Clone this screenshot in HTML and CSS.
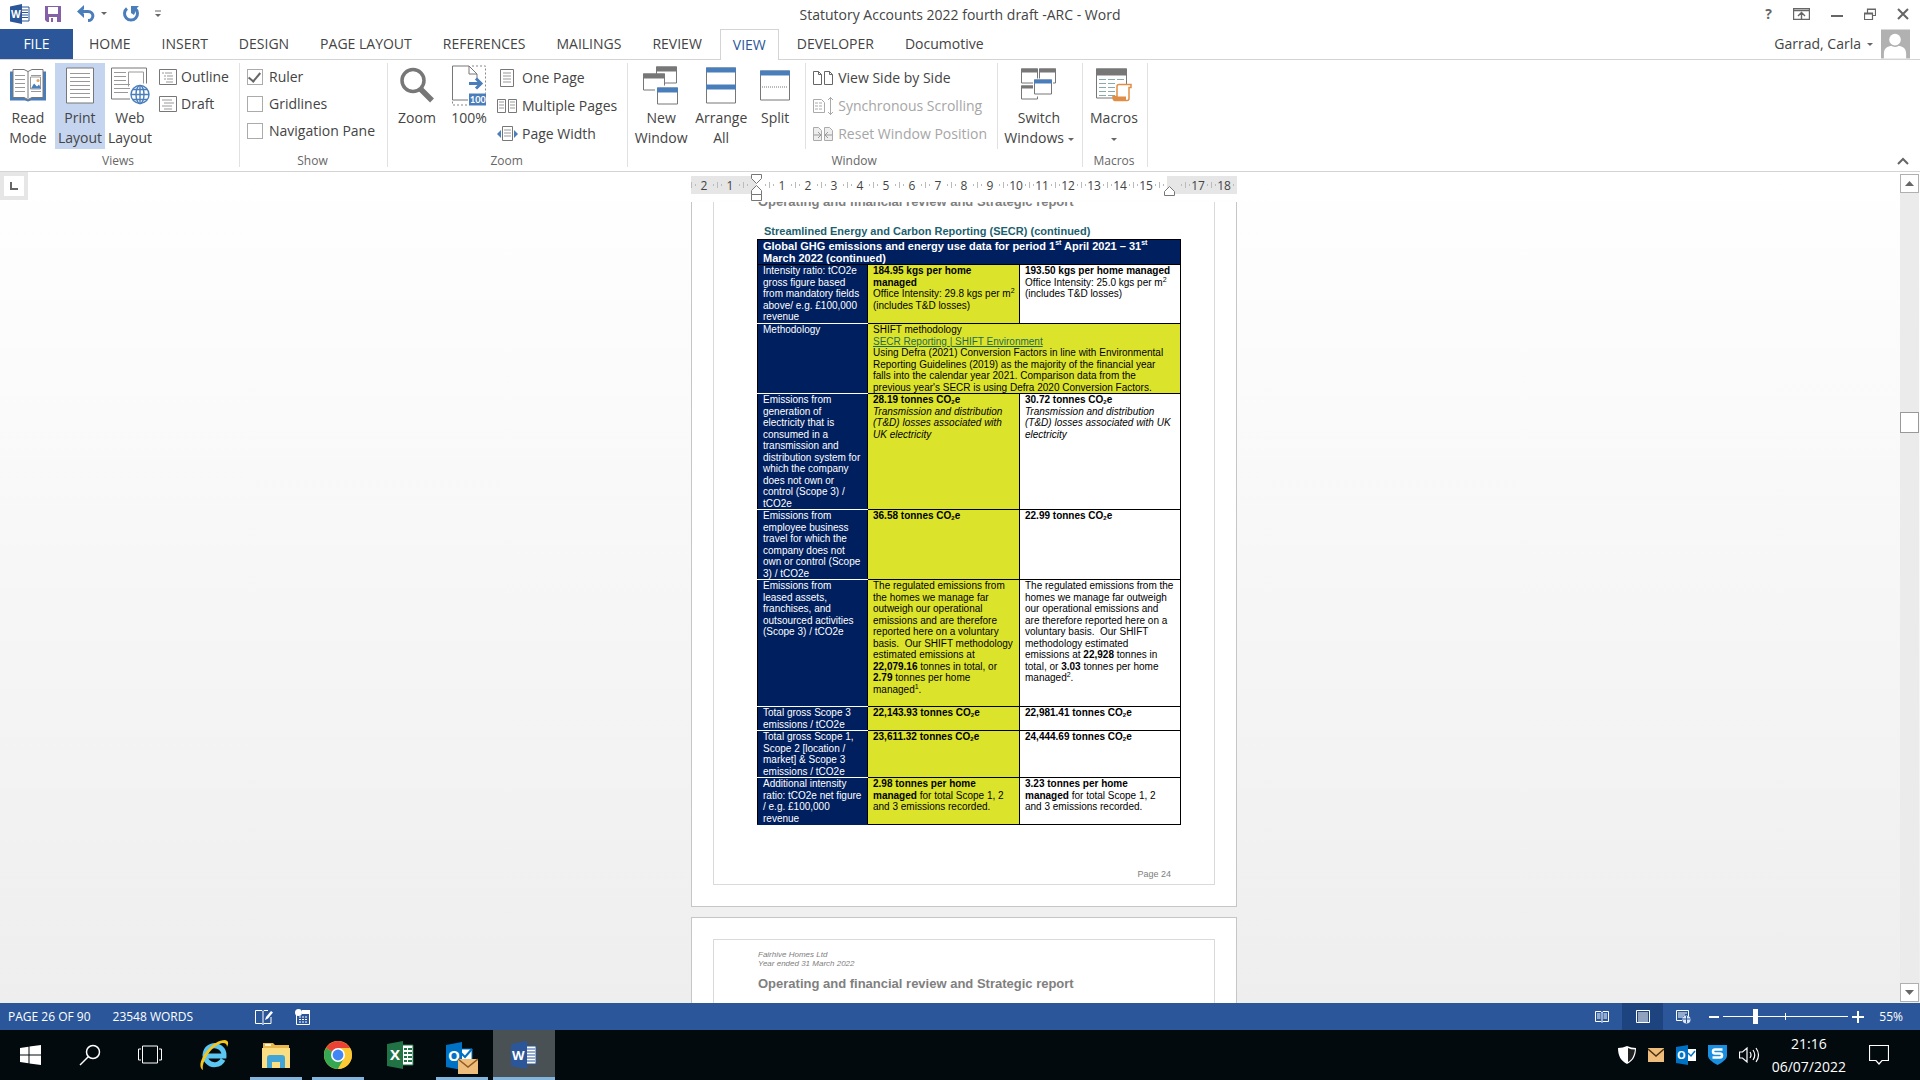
FILE: index.html
```html
<!DOCTYPE html>
<html lang="en">
<head>
<meta charset="utf-8">
<title>Statutory Accounts 2022 fourth draft -ARC - Word</title>
<link rel="stylesheet" href="styles.css">
</head>
<body>
<header class="titlebar">
  <div class="quick">
    <svg class="ic-word" width="20" height="20" viewBox="0 0 20 20"><path d="M10 3h9v14h-9z" fill="#fff" stroke="#2b579a"/><path d="M12 6h6M12 8.500h6M12 11h6M12 13.500h6" stroke="#2b579a"/><path d="M0 2.500 12 0v20L0 17.500z" fill="#2b579a"/><text x="1" y="14" font-family="Open Sans, sans-serif" font-size="10" font-weight="700" fill="#fff">W</text></svg>
    <button class="q-save" aria-label="Save"><svg width="16" height="16" viewBox="0 0 16 16"><path d="M0 0h16v16H2L0 14z" fill="#8560a8"/><path d="M3 1h10v7H3z" fill="#fff"/><path d="M4 11h8v5H4z" fill="#fff"/><path d="M6 12h2v4H6z" fill="#8560a8"/></svg></button>
    <button class="q-undo" aria-label="Undo"><svg width="32" height="18" viewBox="0 0 32 18"><path d="M2 6.500h9c7 0 6 9 0 9" fill="none" stroke="#4a7ebb" stroke-width="3"/><path d="M0 6.500 7 0v4l-2 2.500L7 9v4z" fill="#4a7ebb"/><path d="m24 7 6 0-3 3z" fill="#666"/></svg></button>
    <button class="q-redo" aria-label="Repeat"><svg width="18" height="18" viewBox="0 0 18 18"><path d="M5 3.500a6.500 6.500 0 1 0 8 0" fill="none" stroke="#4a7ebb" stroke-width="3"/><path d="M9 1h8l-2 2-3 7-3-2z" fill="#4a7ebb"/></svg></button>
    <button class="q-more" aria-label="Customize"><svg width="6" height="8" viewBox="0 0 6 8"><path d="M0 1h6" stroke="#666"/><path d="M0 4h6L3 7z" fill="#666"/></svg></button>
  </div>
  <h1 class="doc-title">Statutory Accounts 2022 fourth draft -ARC - Word</h1>
  <div class="wincontrols">
    <button aria-label="Help" class="help">?</button>
    <button aria-label="Ribbon display options"><svg width="17" height="12" viewBox="0 0 17 12"><path d="M.5.5h16v11H.5zM.5 2.500h16M8.500 11V5M5 8l3.500-3.500L12 8" fill="none" stroke="#666" stroke-width="1.400"/></svg></button>
    <button aria-label="Minimize"><svg width="12" height="12" viewBox="0 0 12 12"><path d="M0 8h12" stroke="#666" stroke-width="2"/></svg></button>
    <button aria-label="Restore"><svg width="12" height="12" viewBox="0 0 12 12"><path d="M.5 5h8v6.500h-8zM.5 6h8M3.500 5V1h8v6.500h-3M3.500 1.500h8" fill="none" stroke="#666" stroke-width="1.200"/></svg></button>
    <button aria-label="Close"><svg width="12" height="12" viewBox="0 0 12 12"><path d="m1 1 10 10M11 1 1 11" stroke="#666" stroke-width="2"/></svg></button>
  </div>
</header>

<nav class="tabs">
  <button class="tab file">FILE</button>
  <button class="tab">HOME</button>
  <button class="tab">INSERT</button>
  <button class="tab">DESIGN</button>
  <button class="tab">PAGE LAYOUT</button>
  <button class="tab">REFERENCES</button>
  <button class="tab">MAILINGS</button>
  <button class="tab">REVIEW</button>
  <button class="tab active">VIEW</button>
  <button class="tab">DEVELOPER</button>
  <button class="tab">Documotive</button>
  <button class="account">Garrad, Carla <i class="caret"></i><svg width="29" height="30" viewBox="0 0 30 30"><path d="M0 0h30v30H0z" fill="#b1b1b1"/><circle cx="14.500" cy="10.500" r="6" fill="#fff"/><path d="M3 30v-5c0-6 4-8 8-8q4 2 7 0c4 0 8 2 8 8v5z" fill="#fff"/></svg></button>
</nav>

<section class="ribbon">
  <div class="group">
    <div class="controls">
      <button class="big w54"><svg width="38" height="34" viewBox="0 0 38 34"><path d="M1 3v29h15l3 1 3-1h15V3" fill="#4a7ebb"/><path d="M4 1h11l4 2 4-2h11v28H23l-4 2-4-2H4zM19 3v27" fill="#fff" stroke="#777"/><path d="M6 7h10M6 11h10M6 15h10M6 19h10M6 23h10M22 23h10M22 7h10" stroke="#999"/><path d="M21.500 8.500h10v12h-10z" fill="#fff" stroke="#999"/><path d="m22 20 3-5 3 3 2-2 2 4z" fill="#4a7ebb"/><circle cx="29" cy="12" r="1.500" fill="#e8a25c"/></svg><span>Read<br>Mode</span></button>
      <button class="big w50 on"><svg width="28" height="36" viewBox="0 0 28 36"><path d="M.5.5h27v35H.5z" fill="#fff" stroke="#777"/><path d="M4 6h20M4 10h20M4 14h20M4 18h20M4 22h20M4 26h20M4 30h20" stroke="#999"/></svg><span>Print<br>Layout</span></button>
      <button class="big w50"><svg width="40" height="38" viewBox="0 0 40 38"><path d="M36.500 17V1.500H1.500v31H20" fill="none" stroke="#777"/><path d="M4 6h12M4 10h12M4 14h12M4 18h16M4 22h16M4 26h14M18.500 20V5.500h15V17" fill="none" stroke="#999"/><g fill="#fff" stroke="#4a7ebb" stroke-width="1.400"><circle cx="30" cy="28" r="9"/><ellipse cx="30" cy="28" rx="4" ry="9"/><path d="M21 28h18M22.500 23h15M22.500 33h15M30 19v18"/></g></svg><span>Web<br>Layout</span></button>
      <div class="list tight">
        <button class="small"><svg width="18" height="16" viewBox="0 0 18 16"><path d="M.5.5h17v15H.5z" fill="#fff" stroke="#777"/><path d="M3 4h2m1 0h7M5 7h2m1 0h6M5 10h2m1 0h6M7 13h7" stroke="#999"/></svg>Outline</button>
        <button class="small"><svg width="18" height="16" viewBox="0 0 18 16"><path d="M.5.5h17v15H.5z" fill="#fff" stroke="#777"/><path d="M3 4h10M5 7h10M3 10h10M5 13h8" stroke="#999"/></svg>Draft</button>
      </div>
    </div>
    <div class="caption">Views</div>
  </div>
  <div class="group show">
    <div class="controls">
      <div class="list tight">
        <label class="small"><input type="checkbox" checked>Ruler</label>
        <label class="small"><input type="checkbox">Gridlines</label>
        <label class="small"><input type="checkbox">Navigation Pane</label>
      </div>
    </div>
    <div class="caption">Show</div>
  </div>
  <div class="group">
    <div class="controls">
      <button class="big w54"><svg width="36" height="36" viewBox="0 0 36 36"><circle cx="14" cy="13" r="11" fill="#fff" stroke="#777" stroke-width="3.500"/><path d="m21 21 12 12" stroke="#777" stroke-width="5.500"/></svg><span>Zoom</span></button>
      <button class="big w50"><svg width="34" height="40" viewBox="0 0 34 40"><path d="M16 34.500H.5v-34H17l8 8V14M17 .5v8h8" fill="#fff" stroke="#777"/><path d="M20 .5h13.500V28M.5 36v3.500H16" fill="none" stroke="#888" stroke-dasharray="2 2"/><path d="M17 18h12M24 13l5 5-5 5" fill="none" stroke="#4a7ebb" stroke-width="3"/><path d="M17 28h17v12H17z" fill="#4a7ebb"/><text x="18" y="37" font-size="9" font-weight="700" font-family="Lato, sans-serif" fill="#fff">100</text></svg><span>100%</span></button>
      <div class="list">
        <button class="small"><svg width="22" height="18" viewBox="0 0 22 18"><path d="M4.500.5h13v17h-13z" fill="#fff" stroke="#777"/><path d="M7 4h8M7 7h8M7 10h8M7 13h8" stroke="#999"/></svg>One Page</button>
        <button class="small"><svg width="22" height="18" viewBox="0 0 22 18"><path d="M1.500 2.500h8v13h-8zM12.500 2.500h8v13h-8z" fill="#fff" stroke="#777"/><path d="M3 5h5M3 8h5M3 11h5M14 5h5M14 8h5M14 11h5" stroke="#999"/></svg>Multiple Pages</button>
        <button class="small"><svg width="22" height="18" viewBox="0 0 22 18"><path d="M6.500 1.500h10v14h-10z" fill="#fff" stroke="#777"/><path d="M8 5h7M8 8h7M8 11h7" stroke="#999"/><path d="m5 5-4 4 4 4zM18 5l4 4-4 4z" fill="#4a7ebb"/></svg>Page Width</button>
      </div>
    </div>
    <div class="caption">Zoom</div>
  </div>
  <div class="group">
    <div class="controls">
      <button class="big w62"><svg width="36" height="38" viewBox="0 0 36 38"><path d="M13.500.5h20v16h-20z" fill="#fff" stroke="#777"/><path d="M13 0h21v5H13z" fill="#777"/><path d="M.5 7.500h21v16H.5z" fill="#fff" stroke="#777"/><path d="M0 7h22v5H0z" fill="#777"/><path d="M12 19h24v19H12z" fill="#fff"/><path d="M14.500 21.500h20v16h-20z" fill="#fff" stroke="#777"/><path d="M14 21h21v5H14z" fill="#4a7ebb"/></svg><span>New<br>Window</span></button>
      <button class="big w58"><svg width="30" height="36" viewBox="0 0 30 36"><path d="M.5.5h29v35H.5z" fill="#fff" stroke="#777"/><path d="M0 0h30v5H0zM0 17h30v5H0z" fill="#4a7ebb"/></svg><span>Arrange<br>All</span></button>
      <button class="big w50"><svg width="30" height="30" viewBox="0 0 30 30"><path d="M.5.5h29v29H.5z" fill="#fff" stroke="#777"/><path d="M0 0h30v5H0z" fill="#4a7ebb"/><path d="M2 16.500h26" stroke="#777" stroke-dasharray="1 1"/></svg><span>Split</span></button>
      <div class="list ruled">
        <button class="small"><svg width="22" height="16" viewBox="0 0 22 16"><path d="M1.500 1.500h5l3 3v10h-8zM12.500 1.500h5l3 3v10h-8zM6.500 1.500v3h3M17.500 1.500v3h3" fill="#fff" stroke="#666"/></svg>View Side by Side</button>
        <button class="small" disabled><svg width="22" height="18" viewBox="0 0 22 18"><path d="M1.500 2.500h8l3 3v10h-11z" fill="#fff" stroke="#aaa"/><path d="M3 6h3M7 6h3M3 9h3M7 9h3M3 12h3M7 12h3M18.500 0v18M16 3l2.500-2.500L21 3M16 15l2.500 2.500L21 15" fill="none" stroke="#aaa"/></svg>Synchronous Scrolling</button>
        <button class="small" disabled><svg width="22" height="16" viewBox="0 0 22 16"><path d="M1.500 1.500h5l3 3v10h-8zM12.500 1.500h5l3 3v10h-8z" fill="#eee" stroke="#aaa"/><path d="M2 9h6M6 6l3 3-3 3M20 9h-6M16 6l-3 3 3 3" fill="none" stroke="#999"/></svg>Reset Window Position</button>
      </div>
      <button class="big w78"><svg width="36" height="34" viewBox="0 0 36 34"><path d="M.5.5h16v14H.5zM18.500.5h16v14h-16zM.5 17.500h16v13H.5z" fill="#fff" stroke="#777"/><path d="M0 0h17v4H0zM18 0h17v4H18zM0 17h17v3H0z" fill="#777"/><path d="M12 10h20v18H12z" fill="#fff"/><path d="M13.500 11.500h17v14h-17z" fill="#fff" stroke="#777"/><path d="M13 11h18v4H13z" fill="#4a7ebb"/></svg><span>Switch<br>Windows <i class="caret"></i></span></button>
    </div>
    <div class="caption">Window</div>
  </div>
  <div class="group">
    <div class="controls">
      <button class="big w58"><svg width="36" height="34" viewBox="0 0 36 34"><path d="M.5.5h30v29H.5z" fill="#fff" stroke="#777"/><path d="M0 0h31v7H0z" fill="#777"/><path d="M3 11h7m2 0h7m2 0h7M3 15h7m2 0h7M3 19h7m2 0h7M3 23h7m2 0h7M3 27h7m2 0h7" stroke="#8aa"/><path d="M21 28V18q0-2 2-2h12v3h-2v11q0 2-2 2H19q-2 0-2-4z" fill="#fff" stroke="#e08e45" stroke-width="1.500"/><path d="M17 28h13v4H19q-2 0-2-4z" fill="#e08e45"/></svg><span>Macros<br><i class="caret"></i></span></button>
    </div>
    <div class="caption">Macros</div>
  </div>
  <button class="collapse" aria-label="Collapse ribbon"><svg width="12" height="8" viewBox="0 0 12 8"><path d="m1 7 5-5 5 5" fill="none" stroke="#666" stroke-width="2"/></svg></button>
</section>

<main class="workspace">
  <div class="gutter"><button class="tabstop" aria-label="Tab stop"><svg width="8" height="8" viewBox="0 0 8 8"><path d="M1 0v7h7" fill="none" stroke="#666" stroke-width="2"/></svg></button></div>
  <div class="canvas">
    <div class="ruler">
      <span>2</span><span>1</span><span></span><span>1</span><span>2</span><span>3</span><span>4</span><span>5</span><span>6</span><span>7</span><span>8</span><span>9</span><span>10</span><span>11</span><span>12</span><span>13</span><span>14</span><span>15</span><span></span><span>17</span><span>18</span>
      <svg class="indent-left" width="11" height="30" viewBox="0 0 11 30"><path d="M.5.500h10v4l-5 5-5-5zM.5 20.500v-4l5-5 5 5v4zM.5 20.500h10v6H.5z" fill="#fff" stroke="#777"/></svg>
      <svg class="indent-right" width="11" height="11" viewBox="0 0 11 11"><path d="M.5 9.500v-4l5-5 5 5v4z" fill="#fff" stroke="#777"/></svg>
    </div>
    <div class="pages">
      <article class="sheet first">
        <div class="frame">
          <h2 class="report">Operating and financial review and Strategic report</h2>
          <h3 class="section">Streamlined Energy and Carbon Reporting (SECR) (continued)</h3>
          <table class="data">
            <colgroup><col class="c1"><col class="c2"><col class="c3"></colgroup>
            <thead><tr class="r25"><th colspan="3">Global GHG emissions and energy use data for period 1<sup>st</sup> April 2021 – 31<sup>st</sup><br>March 2022 (continued)</th></tr></thead>
            <tbody>
              <tr class="r59"><th>Intensity ratio: tCO2e<br>gross figure based<br>from mandatory fields<br>above/ e.g. £100,000<br>revenue</th><td class="hl"><b>184.95 kgs per home<br>managed</b><br>Office Intensity: 29.8 kgs per m<sup>2</sup><br>(includes T&amp;D losses)</td><td><b>193.50 kgs per home managed</b><br>Office Intensity: 25.0 kgs per m<sup>2</sup><br>(includes T&amp;D losses)</td></tr>
              <tr class="r70"><th>Methodology</th><td class="hl" colspan="2">SHIFT methodology<br><a href="#shift">SECR Reporting | SHIFT Environment</a><br>Using Defra (2021) Conversion Factors in line with Environmental<br>Reporting Guidelines (2019) as the majority of the financial year<br>falls into the calendar year 2021. Comparison data from the<br>previous year's SECR is using Defra 2020 Conversion Factors.</td></tr>
              <tr class="r116"><th>Emissions from<br>generation of<br>electricity that is<br>consumed in a<br>transmission and<br>distribution system for<br>which the company<br>does not own or<br>control (Scope 3) /<br>tCO2e</th><td class="hl"><b>28.19 tonnes CO<sub>2</sub>e</b><br><em>Transmission and distribution<br>(T&amp;D) losses associated with<br>UK electricity</em></td><td><b>30.72 tonnes CO<sub>2</sub>e</b><br><em>Transmission and distribution<br>(T&amp;D) losses associated with UK<br>electricity</em></td></tr>
              <tr class="r70"><th>Emissions from<br>employee business<br>travel for which the<br>company does not<br>own or control (Scope<br>3) / tCO2e</th><td class="hl"><b>36.58 tonnes CO<sub>2</sub>e</b></td><td><b>22.99 tonnes CO<sub>2</sub>e</b></td></tr>
              <tr class="r127"><th>Emissions from<br>leased assets,<br>franchises, and<br>outsourced activities<br>(Scope 3) / tCO2e</th><td class="hl">The regulated emissions from<br>the homes we manage far<br>outweigh our operational<br>emissions and are therefore<br>reported here on a voluntary<br>basis.&nbsp; Our SHIFT methodology<br>estimated emissions at<br><b>22,079.16</b> tonnes in total, or<br><b>2.79</b> tonnes per home<br>managed<sup>1</sup>.</td><td>The regulated emissions from the<br>homes we manage far outweigh<br>our operational emissions and<br>are therefore reported here on a<br>voluntary basis.&nbsp; Our SHIFT<br>methodology estimated<br>emissions at <b>22,928</b> tonnes in<br>total, or <b>3.03</b> tonnes per home<br>managed<sup>2</sup>.</td></tr>
              <tr class="r24"><th>Total gross Scope 3<br>emissions / tCO2e</th><td class="hl"><b>22,143.93 tonnes CO<sub>2</sub>e</b></td><td><b>22,981.41 tonnes CO<sub>2</sub>e</b></td></tr>
              <tr class="r47"><th>Total gross Scope 1,<br>Scope 2 [location /<br>market] &amp; Scope 3<br>emissions / tCO2e</th><td class="hl"><b>23,611.32 tonnes CO<sub>2</sub>e</b></td><td><b>24,444.69 tonnes CO<sub>2</sub>e</b></td></tr>
              <tr class="r47"><th>Additional intensity<br>ratio: tCO2e net figure<br>/ e.g. £100,000<br>revenue</th><td class="hl"><b>2.98 tonnes per home<br>managed</b> for total Scope 1, 2<br>and 3 emissions recorded.</td><td><b>3.23 tonnes per home<br>managed</b> for total Scope 1, 2<br>and 3 emissions recorded.</td></tr>
            </tbody>
          </table>
          <p class="pageno">Page 24</p>
        </div>
      </article>
      <article class="sheet">
        <div class="frame next">
          <p class="running">Fairhive Homes Ltd<br>Year ended 31 March 2022</p>
          <h2 class="report">Operating and financial review and Strategic report</h2>
        </div>
      </article>
    </div>
  </div>
  <div class="scrollbar">
    <button aria-label="Scroll up"><svg width="9" height="5" viewBox="0 0 9 5"><path d="M0 5 4.500 0 9 5z" fill="#666"/></svg></button>
    <div class="track"><div class="thumb"></div></div>
    <button aria-label="Scroll down"><svg width="9" height="5" viewBox="0 0 9 5"><path d="M0 0h9L4.500 5z" fill="#666"/></svg></button>
  </div>
</main>

<footer class="status">
  <span class="st-page">PAGE 26 OF 90</span>
  <span class="st-words">23548 WORDS</span>
  <button aria-label="Proofing"><svg width="18" height="16" viewBox="0 0 18 16"><path d="M16 8v6.500H9l-1 1-1-1H.5v-13H7l1 1 1-1h4M8 2.500v13" fill="none" stroke="#fff"/><path d="m10 11 1-3 5-6 2 1.500-5 6z" fill="#fff"/></svg></button>
  <button class="macro" aria-label="Record macro"><svg width="16" height="16" viewBox="0 0 16 16"><path d="M1.500 6v9.500h13V1.500H8" fill="none" stroke="#fff"/><path d="M7 1h8v4H7z" fill="#fff"/><circle cx="3.500" cy="3.500" r="3.500" fill="#fff"/><path d="M4 8h2m1 0h2m1 0h2M4 10.500h2m1 0h2m1 0h2M4 13h2m1 0h2m1 0h2" stroke="#fff"/></svg></button>
  <div class="st-right">
    <button class="view" aria-label="Read mode"><svg width="14" height="12" viewBox="0 0 14 12"><path d="M.5.500h5.500l1 1 1-1h5.500v10H8l-1 1-1-1H.5zM7 1v10M2 3h3.500M2 5h3.500M2 7h3.500M8.500 3H12M8.500 5H12M8.500 7H12" fill="none" stroke="#fff"/></svg></button>
    <button class="view on" aria-label="Print layout"><svg width="14" height="13" viewBox="0 0 14 13"><path d="M.5.500h13v12H.5zM2 3h10M2 5h10M2 7h10M2 9h10M2 11h10" fill="none" stroke="#fff"/></svg></button>
    <button class="view" aria-label="Web layout"><svg width="15" height="14" viewBox="0 0 15 14"><path d="M12.500 6V.5H.5v10H6M2 3h9M2 5h7M2 7h5" fill="none" stroke="#fff"/><circle cx="10.500" cy="9.500" r="4" fill="#dce6f5"/><path d="M7 9h7M10.500 6v7" stroke="#2b579a"/></svg></button>
    <button class="step" aria-label="Zoom out"><svg width="10" height="12" viewBox="0 0 10 12"><path d="M0 6h10" stroke="#fff" stroke-width="2"/></svg></button>
    <input class="zoom" type="range" min="0" max="100" value="25" aria-label="Zoom">
    <button class="step" aria-label="Zoom in"><svg width="12" height="12" viewBox="0 0 12 12"><path d="M0 6h12M6 0v12" stroke="#fff" stroke-width="2"/></svg></button>
    <span class="pct">55%</span>
  </div>
</footer>

<nav class="taskbar">
  <button class="sys" aria-label="Start"><svg width="21" height="20" viewBox="0 0 21 20"><path d="m0 3 8.500-1.200v7.700H0zM9.500 1.600 21 0v9.500H9.500zM0 10.500h8.500v7.700L0 17zM9.500 10.500H21V20L9.500 18.400z" fill="#fff"/></svg></button>
  <button class="sys" aria-label="Search"><svg width="22" height="22" viewBox="0 0 22 22"><circle cx="14" cy="8" r="6.500" fill="none" stroke="#fff" stroke-width="1.500"/><path d="m9.500 12.500-8.500 8.500" stroke="#fff" stroke-width="1.500"/></svg></button>
  <button class="sys last" aria-label="Task view"><svg width="24" height="20" viewBox="0 0 24 20"><path d="M4.500 1h15v17h-15zM3 4H.5v11H3M21 4h2.500v11H21" fill="none" stroke="#fff"/></svg></button>
  <button class="app" aria-label="Internet Explorer"><svg width="32" height="32" viewBox="0 0 32 32"><path d="M25 20.500A9.500 9.500 0 1 1 26 17H9" fill="none" stroke="#5cc6f2" stroke-width="5"/><path d="M5 31C-4 27 12 1 27 1q5 1 2 7 0-4-4-4C15 5 3 22 5 31z" fill="#f6c61c"/></svg></button>
  <button class="app run" aria-label="File Explorer"><svg width="28" height="28" viewBox="0 0 28 28"><path d="M1 2h10l2 2h14v23H1z" fill="#e9b84c"/><path d="M0 7h28v20H0z" fill="#fbdd82"/><path d="M3 3h6v2H3z" fill="#fff3c8"/><path d="M5 27V17q0-3 3-3h12q3 0 3 3v10h-5v-6h-8v6z" fill="#41a5d8"/></svg></button>
  <button class="app run" aria-label="Chrome"><svg width="28" height="28" viewBox="0 0 28 28"><circle cx="14" cy="14" r="14" fill="#fcc934"/><path d="M14 14 1.900 7A14 14 0 0 1 26.100 7z" fill="#ea4335"/><path d="M14 14 1.900 7A14 14 0 0 0 14 28l6-10.500z" fill="#34a853"/><path d="M14 7h12.100A14 14 0 0 1 14 28l6-10.500z" fill="#fcc934"/><circle cx="14" cy="14" r="7" fill="#fff"/><circle cx="14" cy="14" r="5.400" fill="#4285f4"/></svg></button>
  <button class="app" aria-label="Excel"><svg width="27" height="28" viewBox="0 0 27 28"><path d="M14 4h12v20H14z" fill="#fff" stroke="#217346"/><path d="M17 8h3m1 0h4M17 12h3m1 0h4M17 16h3m1 0h4M17 20h3m1 0h4" stroke="#217346" stroke-width="2"/><path d="m0 3 16-3v28L0 25z" fill="#217346"/><text x="3" y="19" font-size="15" font-weight="700" font-family="Open Sans, sans-serif" fill="#fff">X</text></svg></button>
  <button class="app run" aria-label="Outlook"><svg class="low" width="32" height="32" viewBox="0 0 32 32"><path d="M14 7h12v15H14z" fill="#fff" stroke="#0072c6"/><path d="m15 11 4 4 7-8" fill="none" stroke="#0072c6" stroke-width="2"/><path d="m0 3 16-3v28L0 25z" fill="#0072c6"/><text x="2" y="19" font-size="15" font-weight="700" font-family="Open Sans, sans-serif" fill="#fff">O</text><path d="M12 17h20v15H12z" fill="#efbd7b"/><path d="m12 17 10 8 10-8" fill="none" stroke="#8c5a20" stroke-width="1.500"/></svg></button>
  <button class="app run on" aria-label="Word"><svg width="26" height="28" viewBox="0 0 26 28"><path d="M14 5h11v18H14z" fill="#fff" stroke="#2b579a"/><path d="M16 8h8M16 11h8M16 14h8M16 17h8M16 20h8" stroke="#2b579a"/><path d="m0 3 16-3v28L0 25z" fill="#2b579a"/><text x="1" y="19" font-size="13" font-weight="700" font-family="Open Sans, sans-serif" fill="#fff">W</text></svg></button>
  <div class="tray">
    <button aria-label="Security"><svg width="18" height="18" viewBox="0 0 18 18"><path d="M9 0q4 2 9 2c0 8-3 13-9 16C3 15 0 10 0 2q5 0 9-2z" fill="#fff"/><path d="M10 2q3 1.500 7 1.500C16 10 14 14 10 16z" fill="#222"/></svg></button>
    <button aria-label="New mail"><svg width="16" height="14" viewBox="0 0 16 14"><path d="M0 0h16v14H0z" fill="#efbd7b"/><path d="m0 1 8 7 8-7" fill="none" stroke="#4a3213" stroke-width="1.500"/></svg></button>
    <button aria-label="Outlook"><svg width="20" height="20" viewBox="0 0 20 20"><path d="M11 4h9v12h-9z" fill="#fff"/><path d="m12 8 3 3 4-5" fill="none" stroke="#0072c6" stroke-width="1.500"/><path d="m0 2 12-2v20L0 18z" fill="#0072c6"/><text x="1" y="14" font-size="11" font-weight="700" font-family="Open Sans, sans-serif" fill="#fff">O</text></svg></button>
    <button aria-label="Sophos"><svg width="19" height="20" viewBox="0 0 19 20"><path d="M0 0h19v11q0 4-9.500 9Q0 15 0 11z" fill="#1a8fe0"/><path d="M14.500 4.500H7q-2 0-2 2t2 2h5q2 0 2 2t-2 2H4.500" fill="none" stroke="#fff" stroke-width="2.500"/></svg></button>
    <button aria-label="Volume"><svg width="21" height="18" viewBox="0 0 21 18"><path d="M.5 6h3L8 2v14l-4.500-4h-3zM11 6q2 3 0 6M14 4q3.500 5 0 10M17 2q5 7 0 14" fill="none" stroke="#fff" stroke-width="1.200"/></svg></button>
    <div class="clock">21:16<br>06/07/2022</div>
    <button class="notify" aria-label="Notifications"><svg width="20" height="20" viewBox="0 0 20 20"><path d="M.5.500h19v15H13L10 19l-3-3.500H.5z" fill="none" stroke="#fff" stroke-width="1.200"/></svg></button>
  </div>
</nav>
</body>
</html>
```
FILE: styles.css
```css
* { box-sizing: border-box; }
body {
  margin: 0;
  height: 100vh;
  display: flex;
  flex-direction: column;
  overflow: hidden;
  background: #fff;
  color: #444;
  font: 14px/20px "Open Sans", "Noto Sans", sans-serif;
}
button {
  padding: 0;
  border: 0;
  background: none;
  color: inherit;
  font: inherit;
}
svg { display: block; flex: none; }
h1, h2, h3, p { margin: 0; font-weight: inherit; }

/* Title bar */
.titlebar {
  height: 29px;
  flex: none;
  display: grid;
  grid-template-columns: 1fr auto 1fr;
  align-items: center;
}
.quick { display: flex; align-items: center; padding: 0 0 2px 10px; }
.q-save { margin-left: 15px; }
.q-undo { margin-left: 16px; }
.q-redo { margin-left: 13px; }
.q-more { margin-left: 15px; }
.doc-title { font-size: 14px; }
.wincontrols {
  display: flex;
  justify-content: flex-end;
  align-items: center;
  gap: 21px;
  padding: 0 11px 2px 0;
}
.help { font-weight: 700; font-size: 14px; color: #666; }

/* Tabs */
.tabs { display: flex; height: 31px; flex: none; border-bottom: 1px solid #d4d4d4; }
.tab { padding: 0 13px; margin-right: 5px; white-space: nowrap; }
.tab.file { width: 73px; margin-right: 3px; background: #2b579a; color: #fff; }
.tab.active {
  margin-bottom: -1px;
  padding: 0 12px;
  border: 1px solid #d4d4d4;
  border-bottom: 0;
  background: #fff;
  color: #2b579a;
}
.account { display: flex; align-items: center; margin-left: auto; padding-right: 10px; }
.account .caret { margin: 0 8px 0 6px; }
.caret {
  display: inline-block;
  vertical-align: middle;
  border: 3px solid transparent;
  border-top-color: #666;
  border-bottom: 0;
}

/* Ribbon */
.ribbon { display: flex; height: 112px; flex: none; padding: 3px 0 0 1px; border-bottom: 1px solid #d4d4d4; }
.group { display: flex; flex-direction: column; height: 104px; padding-right: 4px; border-right: 1px solid #e1e1e1; }
.group + .group { padding-left: 2px; }
.controls { display: flex; flex: none; height: 86px; }
.caption { flex: none; font-size: 12px; line-height: 24px; text-align: center; color: #666; }
.big { display: flex; flex-direction: column; align-items: center; text-align: center; white-space: nowrap; }
.big svg { height: 41px; margin-top: 2px; }
.big span { margin-top: 2px; }
.big.on { background: #c5d5f0; }
.w50 { width: 50px; }
.w54 { width: 54px; }
.w58 { width: 58px; }
.w62 { width: 62px; }
.w78 { width: 78px; }
.list { display: grid; grid-auto-rows: 28px; align-content: start; justify-items: start; padding: 1px 6px 0 2px; }
.list.tight { grid-auto-rows: 27px; padding: 0 6px 0 4px; }
.small { display: flex; align-items: center; gap: 4px; white-space: nowrap; }
.small:disabled { color: #a6a6a6; }
.show .list.tight { padding-left: 5px; padding-right: 8px; }
.show .small { gap: 6px; }
.small input {
  appearance: none;
  width: 16px;
  height: 16px;
  margin: 0;
  border: 1px solid #ababab;
  background: #fff;
  display: grid;
  place-items: center;
}
.small input:checked::before {
  content: "";
  width: 5px;
  height: 10px;
  margin-top: -2px;
  border: solid #666;
  border-width: 0 2px 2px 0;
  rotate: 40deg;
}
.list.ruled {
  padding-left: 6px;
  padding-right: 10px;
  margin: 0 2px 0 5px;
  border: solid #e1e1e1;
  border-width: 0 1px;
}
.collapse { margin: auto 11px 6px auto; }

/* Workspace */
.workspace {
  flex: 1;
  min-height: 0;
  display: flex;
  overflow: hidden;
  background: linear-gradient(#fff, #eee);
}
.gutter { width: 28px; height: 28px; padding: 4px; background: #e6e6e6; }
.tabstop { width: 20px; height: 20px; display: grid; place-items: center; background: #fff; }
.canvas { flex: 1; min-width: 0; display: flex; flex-direction: column; align-items: center; }
.ruler {
  position: relative;
  display: flex;
  margin-top: 4px;
  height: 18px;
  background: linear-gradient(90deg, #e6e6e6 65px, #fff 65px 476px, #e6e6e6 476px);
}
.ruler span {
  width: 26px;
  text-align: center;
  font-size: 12px;
  line-height: 19px;
  background:
    linear-gradient(#bbb, #bbb) 0 6px / 1px 6px no-repeat,
    linear-gradient(#bbb, #bbb) 4px 8px / 1px 2px no-repeat,
    linear-gradient(#bbb, #bbb) 22px 8px / 1px 2px no-repeat;
}
.indent-left { position: absolute; left: 60px; top: -2px; z-index: 1; }
.indent-right { position: absolute; left: 473px; top: 10px; z-index: 1; }
.pages {
  flex: 1;
  min-height: 0;
  margin-top: 8px;
  overflow: hidden;
  display: flex;
  flex-direction: column;
  gap: 10px;
}
.sheet {
  flex: none;
  width: 546px;
  padding: 21px;
  border: 1px solid #c6c6c6;
  background: #fff;
  color: #808080;
  font: 10px/1.15 "Liberation Sans", Arial, sans-serif;
  white-space: nowrap;
}
.sheet.first { padding-top: 0; border-top: 0; }
.frame { border: 1px solid #dadada; padding: 0 35px 4px 44px; }
.first .frame { border-top: 0; }
.next { padding-top: 10px; min-height: 120px; }
.report { font-size: 13px; line-height: 16px; font-weight: 700; }
.first .report { margin-top: -8px; }
.next .report { margin-top: 8px; }
.running { font-size: 8px; line-height: 9px; font-style: italic; }
.section { margin: 14px 0 1px 6px; font-size: 11px; line-height: 14px; font-weight: 700; color: #1c5f6e; }
.pageno { margin-top: 43px; padding-right: 8px; font-size: 9px; line-height: 12px; text-align: right; }

.data { width: 423px; margin-left: -1px; border-collapse: collapse; table-layout: fixed; color: #000; }
.c1 { width: 110px; }
.c2 { width: 152px; }
.c3 { width: 161px; }
.data td, .data th {
  padding: 0 0 0 5px;
  vertical-align: top;
  text-align: left;
  border: 1px solid #000;
}
.data th { background: #001f5f; color: #fff; font-weight: 400; }
.data tbody th { border-bottom-color: #fff; }
.data tbody tr:last-child th { border-bottom-color: #001f5f; }
.data thead th { font-size: 11px; line-height: 12px; font-weight: 700; }
.data .hl { background: #dce32b; }
.data a { color: #1c6b52; }
.data sup, .data sub { font-size: 7px; line-height: 0; }
.data sub { font-size: 6px; vertical-align: -1px; }
.r24 { height: 24px; }
.r25 { height: 25px; }
.r47 { height: 47px; }
.r59 { height: 59px; }
.r70 { height: 70px; }
.r116 { height: 116px; }
.r127 { height: 127px; }

.scrollbar { width: 20px; padding: 2px 1px 1px 0; display: flex; flex-direction: column; }
.scrollbar button { height: 19px; display: grid; place-items: center; border: 1px solid #b0b0b0; background: #fff; }
.track { flex: 1; padding-top: 219px; background: #ebebeb; }
.thumb { height: 21px; border: 1px solid #999; background: #fff; }

/* Status bar */
.status {
  flex: none;
  height: 27px;
  display: flex;
  align-items: center;
  padding-left: 8px;
  background: #2b579a;
  color: #fff;
  font-size: 12px;
}
.st-words { margin: 0 62px 0 22px; }
.macro { margin-left: 22px; }
.st-right { display: flex; align-items: center; height: 100%; margin-left: auto; padding-right: 17px; }
.view { display: grid; place-items: center; width: 41px; height: 27px; }
.view.on { background: #1e4480; }
.step { margin-left: 4px; }
.view + .step { margin-left: 5px; }
.zoom {
  appearance: none;
  width: 125px;
  height: 15px;
  margin: 0 0 0 4px;
  background:
    linear-gradient(#fff, #fff) 0 7px / 125px 1px no-repeat,
    linear-gradient(#fff, #fff) 62px 4px / 1px 7px no-repeat;
}
.zoom::-webkit-slider-thumb { appearance: none; width: 5px; height: 15px; background: #fff; }
.pct { margin-left: 15px; }

/* Taskbar */
.taskbar { flex: none; height: 50px; display: flex; background: #020a0d; color: #fff; }
.sys { width: 60px; display: grid; place-items: center; }
.sys.last { margin-right: 3px; }
.app { width: 62px; display: grid; place-items: center; border: solid transparent; border-width: 0 5px; }
.app.run { box-shadow: inset 0 -3px #82b4dc; }
.app.on { border: 0; background: #4a5154; box-shadow: inset 0 -3px #82b4dc; }
.low { margin-top: 6px; }
.tray { display: flex; align-items: center; gap: 12px; margin-left: auto; padding-right: 31px; }
.clock { margin: 0 11px 0 0; line-height: 23px; text-align: center; }
```
